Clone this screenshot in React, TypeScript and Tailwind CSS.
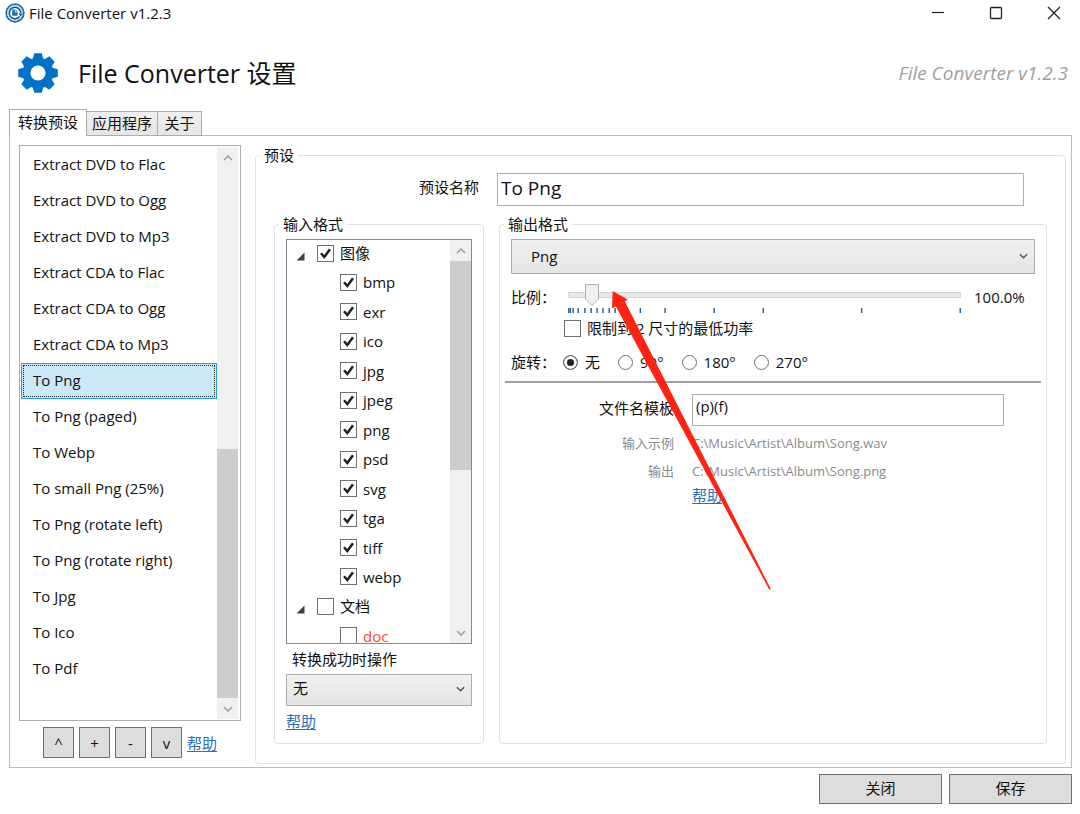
import { useState } from "react";
import clsx from "clsx";

type ScrollBarProps = {
  before: number;
  thumb: number;
};

type CheckProps = {
  id: string;
  label: string;
  checked: boolean;
  onChange: () => void;
  muted?: boolean;
};

const presets = [
  "Extract DVD to Flac",
  "Extract DVD to Ogg",
  "Extract DVD to Mp3",
  "Extract CDA to Flac",
  "Extract CDA to Ogg",
  "Extract CDA to Mp3",
  "To Png",
  "To Png (paged)",
  "To Webp",
  "To small Png (25%)",
  "To Png (rotate left)",
  "To Png (rotate right)",
  "To Jpg",
  "To Ico",
  "To Pdf",
];

const imageFormats = [
  "bmp",
  "exr",
  "ico",
  "jpg",
  "jpeg",
  "png",
  "psd",
  "svg",
  "tga",
  "tiff",
  "webp",
];

const rotations = ["无", "90°", "180°", "270°"];

// slider ticks, in percent of the track
const ticks = [0.2, 0.6, 1.3, 2.6, 4.3, 5.9, 7.4, 8.9, 10.5, 12, 18.4, 24.7, 37.2, 49.7, 74.7, 99.8];

const Chevron = ({ up, className }: { up?: boolean; className?: string }) => (
  <svg viewBox="0 0 10 6" className={clsx("h-[6px]", className ?? "w-[10px]")} fill="none">
    <path d={up ? "M1 5L5 1L9 5" : "M1 1L5 5L9 1"} stroke="currentColor" strokeWidth="1.6" />
  </svg>
);

const ScrollBar = ({ before, thumb }: ScrollBarProps) => (
  <div className="flex w-[21px] shrink-0 flex-col bg-[#f0f0f0] text-[#a0a0a0]">
    <button aria-label="向上滚动" className="flex h-[21px] items-center justify-center">
      <Chevron up />
    </button>
    <div className="min-h-0 flex-1">
      <div style={{ height: `${before}%` }} />
      <div className="bg-[#cdcdcd]" style={{ height: `${thumb}%` }} />
    </div>
    <button aria-label="向下滚动" className="flex h-[21px] items-center justify-center">
      <Chevron />
    </button>
  </div>
);

const Check = ({ id, label, checked, onChange, muted }: CheckProps) => (
  <div className="flex items-center">
    <div className="relative h-[17px] w-[17px]">
      <input
        type="checkbox"
        id={id}
        checked={checked}
        onChange={onChange}
        className="block h-[17px] w-[17px] appearance-none border border-[#707070] bg-white"
      />
      {checked && (
        <svg viewBox="0 0 17 17" className="pointer-events-none absolute inset-0" fill="none">
          <path d="M4 8.2L7.3 12L13 4.2" stroke="#212121" strokeWidth="2.5" />
        </svg>
      )}
    </div>
    <label htmlFor={id} className={clsx("pl-1.5", muted && "text-[#ff4a26]")}>
      {label}
    </label>
  </div>
);

const Expander = () => (
  <button aria-label="折叠" className="mt-1.5 mr-3 h-[9px] w-[9px]">
    <svg viewBox="0 0 9 9">
      <path d="M8.5 0.5V8.5H0.5Z" fill="#404040" />
    </svg>
  </button>
);

const Logo = () => (
  <svg viewBox="0 0 20 20" className="h-5 w-5" fill="none">
    <circle cx="10" cy="10" r="8.8" stroke="#1d6fae" strokeWidth="1.8" />
    <circle cx="10" cy="10" r="7.5" stroke="#a5d0ea" strokeWidth="0.9" />
    <circle cx="10" cy="10" r="6" fill="#fff" />
    <path d="M14.6 13.6A5.8 5.8 0 1 1 15.8 10" stroke="#12578f" strokeWidth="1.6" />
    <path d="M13.4 10.4H18L15.7 13.4Z" fill="#12578f" />
    <path d="M7.2 6.4H10.4L12.6 8.6V12.8H7.2Z" fill="#1d6fae" />
    <path d="M10.1 6.6V9H12.5" stroke="#fff" strokeWidth="0.8" />
  </svg>
);

const Gear = () => (
  <svg viewBox="-20 -20 40 40" className="h-10 w-10" fill="#0173c7">
    {[0, 45, 90, 135, 180, 225, 270, 315].map((angle) => (
      <path key={angle} d="M-5.4 -13.5L-3.8 -19.8H3.8L5.4 -13.5Z" transform={`rotate(${angle})`} />
    ))}
    <circle r="15.4" />
    <circle r="7.6" fill="#fff" />
  </svg>
);

const HelpLink = () => (
  <a href="#help" className="text-[#2a70bd] underline underline-offset-2">
    帮助
  </a>
);

const legendStyle = "px-1 leading-5";
const groupStyle = "min-w-0 rounded-[4px] border border-[#dbe3ea]";
const smallButton = "h-[31px] w-[31px] border border-[#707070] bg-[#dddddd]";
const footerButton = "h-[30px] w-[123px] border border-[#707070] bg-[#dddddd] pb-0.5";
const tabStyle = "border border-[#acacac] pb-0.5";
const selectStyle =
  "block w-full appearance-none border border-[#acacac] bg-linear-to-b from-[#f0f0f0] to-[#e5e5e5]";

const App = () => {
  const [selected, setSelected] = useState("To Png");
  const [name, setName] = useState("To Png");
  const [template, setTemplate] = useState("(p)(f)");
  const [formats, setFormats] = useState<string[]>(["图像", ...imageFormats]);
  const [scale, setScale] = useState(6);
  const [powerOfTwo, setPowerOfTwo] = useState(false);
  const [rotation, setRotation] = useState("无");

  const toggleFormat = (format: string) => {
    setFormats(
      formats.includes(format) ? formats.filter((item) => item !== format) : [...formats, format]
    );
  };

  return (
    <div className="relative flex h-screen flex-col overflow-hidden bg-white font-['Open_Sans','Noto_Sans_CJK_SC',sans-serif] text-[15px] leading-5 text-[#111]">
      {/* title bar */}
      <div className="flex h-[27px] shrink-0 items-center justify-between pr-[19px] pb-px pl-[5px]">
        <div className="flex items-center gap-1">
          <Logo />
          <span>File Converter v1.2.3</span>
        </div>
        <div className="flex items-center gap-11">
          <button aria-label="最小化">
            <svg viewBox="0 0 14 14" className="h-3.5 w-3.5" stroke="#222" fill="none">
              <path d="M1 6.5H13" strokeWidth="1.2" />
            </svg>
          </button>
          <button aria-label="最大化">
            <svg viewBox="0 0 14 14" className="h-3.5 w-3.5" stroke="#222" fill="none">
              <rect x="1.5" y="1.5" width="11" height="11" rx="1" strokeWidth="1.3" />
            </svg>
          </button>
          <button aria-label="关闭窗口">
            <svg viewBox="0 0 14 14" className="h-3.5 w-3.5" stroke="#222" fill="none">
              <path d="M1 1L13 13M13 1L1 13" strokeWidth="1.3" />
            </svg>
          </button>
        </div>
      </div>

      {/* header */}
      <div className="flex h-[82px] shrink-0 items-center justify-between pt-3 pr-3 pb-0.5 pl-[18px]">
        <div className="flex items-center gap-5">
          <Gear />
          <h1 className="text-[25px] leading-8">File Converter 设置</h1>
        </div>
        <span className="text-[19px] text-[#a0a0a0] italic">File Converter v1.2.3</span>
      </div>

      {/* tabs */}
      <div className="z-10 -mb-px flex shrink-0 items-end pl-[9px]" role="tablist">
        <button
          role="tab"
          aria-selected="true"
          className={clsx(tabStyle, "h-[27px] w-[78px] border-b-0 bg-white")}
        >
          转换预设
        </button>
        <button
          role="tab"
          className={clsx(tabStyle, "h-[25px] w-[71px] border-l-0 bg-linear-to-b from-[#f0f0f0] to-[#e5e5e5]")}
        >
          应用程序
        </button>
        <button
          role="tab"
          className={clsx(tabStyle, "h-[25px] w-[44px] border-l-0 bg-linear-to-b from-[#f0f0f0] to-[#e5e5e5]")}
        >
          关于
        </button>
      </div>

      <div className="mr-2 ml-[9px] flex min-h-0 flex-1 gap-3.5 border border-[#bcbcbc] pt-[9px] pr-[5px] pb-[3px] pl-[9px]">
        {/* preset list */}
        <div className="flex w-[222px] shrink-0 flex-col pb-[6px]">
          <div className="flex min-h-0 flex-1 border border-[#abadb3] p-px pr-0.5">
            <ul className="min-w-0 flex-1 overflow-hidden">
              {presets.map((preset) => (
                <li key={preset}>
                  <button
                    onClick={() => setSelected(preset)}
                    className={clsx(
                      "block h-9 w-full border p-px",
                      preset === selected ? "border-[#26a0da] bg-[#cbe8f6]" : "border-transparent"
                    )}
                  >
                    <span
                      className={clsx(
                        "flex h-full items-center border border-dotted px-[9px] pb-0.5",
                        preset === selected ? "border-[#222]" : "border-transparent"
                      )}
                    >
                      {preset}
                    </span>
                  </button>
                </li>
              ))}
            </ul>
            <ScrollBar before={53} thumb={47} />
          </div>
          <div className="mt-[6px] flex items-center gap-[5px] pl-6">
            <button className={smallButton}>^</button>
            <button className={smallButton}>+</button>
            <button className={smallButton}>-</button>
            <button className={smallButton}>v</button>
            <HelpLink />
          </div>
        </div>

        {/* preset settings */}
        <fieldset className={clsx(groupStyle, "flex flex-1 flex-col pr-[18px] pb-[19px] pl-[18px]")}>
          <legend className={clsx(legendStyle, "-ml-[14px]")}>预设</legend>
          <div className="mt-2 mb-2 flex gap-[18px] pr-[23px]">
            <label htmlFor="name" className="w-[205px] pt-1 text-right">
              预设名称
            </label>
            <input
              id="name"
              value={name}
              onChange={(e) => setName(e.target.value)}
              className="h-[33px] min-w-0 flex-1 border border-[#abadb3] px-[3px] pb-1 text-[19px] outline-none"
            />
          </div>

          <div className="flex min-h-0 flex-1 gap-[15px]">
            {/* input formats */}
            <fieldset className={clsx(groupStyle, "flex w-[210px] shrink-0 flex-col px-[11px] pb-3")}>
              <legend className={clsx(legendStyle, "-ml-[7px]")}>输入格式</legend>
              <div className="mt-[5px] flex min-h-0 flex-1 border border-[#828790]">
                <div className="min-w-0 flex-1 overflow-hidden">
                  <ul className="flex h-[409px] flex-col justify-between">
                    <li className="flex h-[26px] items-center pl-[9px]">
                      <Expander />
                      <Check
                        id="images"
                        label="图像"
                        checked={formats.includes("图像")}
                        onChange={() => toggleFormat("图像")}
                      />
                    </li>
                    {imageFormats.map((format) => (
                      <li key={format} className="flex h-[26px] items-center pl-[53px]">
                        <Check
                          id={format}
                          label={format}
                          checked={formats.includes(format)}
                          onChange={() => toggleFormat(format)}
                        />
                      </li>
                    ))}
                    <li className="flex h-[26px] items-center pl-[9px]">
                      <Expander />
                      <Check
                        id="documents"
                        label="文档"
                        checked={formats.includes("文档")}
                        onChange={() => toggleFormat("文档")}
                      />
                    </li>
                    <li className="flex h-[26px] items-center pl-[53px]">
                      <Check
                        id="doc"
                        label="doc"
                        muted
                        checked={formats.includes("doc")}
                        onChange={() => toggleFormat("doc")}
                      />
                    </li>
                  </ul>
                </div>
                <ScrollBar before={0} thumb={58} />
              </div>
              <label htmlFor="after" className="mt-[5px] mb-[5px] pl-1.5">
                转换成功时操作
              </label>
              <div className="relative mb-[5px]">
                <select id="after" className={clsx(selectStyle, "h-8 px-1.5 pb-1")}>
                  <option>无</option>
                </select>
                <Chevron className="pointer-events-none absolute top-3 right-[7px] w-[9px] text-[#555]" />
              </div>
              <div>
                <HelpLink />
              </div>
            </fieldset>

            {/* output format */}
            <fieldset className={clsx(groupStyle, "flex-1")}>
              <legend className={clsx(legendStyle, "ml-1")}>输出格式</legend>
              <div className="relative mx-[11px] mt-[5px]">
                <select
                  aria-label="输出格式"
                  className={clsx(selectStyle, "h-[35px] px-[19px] pb-0.5")}
                >
                  <option>Png</option>
                </select>
                <Chevron className="pointer-events-none absolute top-3.5 right-[7px] w-[9px] text-[#555]" />
              </div>

              <div className="mt-[9px] mr-[11px] ml-[11px] flex">
                <label htmlFor="scale" className="w-[57px] shrink-0 pt-1">
                  比例：
                </label>
                <div className="relative h-[35px] flex-1">
                  <div className="mt-[9px] h-[6px] border border-[#d6d6d6] bg-[#e7eaea]" />
                  <svg className="mt-[10px] h-[6px] w-full">
                    {ticks.map((tick) => (
                      <line key={tick} x1={`${tick}%`} x2={`${tick}%`} y1="0" y2="5" stroke="#1f5f93" strokeWidth="1.4" />
                    ))}
                  </svg>
                  <svg
                    viewBox="0 0 14 22"
                    className="absolute top-px h-[22px] w-[14px] -translate-x-1/2"
                    style={{ left: `${scale}%` }}
                  >
                    <path d="M0.5 0.5H13.5V15L7 21.3L0.5 15Z" fill="#f0f0f0" stroke="#acacac" />
                  </svg>
                  <input
                    id="scale"
                    type="range"
                    min={0}
                    max={100}
                    value={scale}
                    onChange={(e) => setScale(Number(e.target.value))}
                    className="absolute inset-x-0 top-0 h-6 w-full opacity-0"
                  />
                </div>
                <span className="w-[74px] pt-1 pl-[13px]">100.0%</span>
              </div>

              <div className="ml-16">
                <Check
                  id="power"
                  label="限制到 2 尺寸的最低功率"
                  checked={powerOfTwo}
                  onChange={() => setPowerOfTwo(!powerOfTwo)}
                />
              </div>

              <div className="mt-3.5 ml-[11px] flex items-center">
                <span className="w-[52px]">旋转：</span>
                <div className="flex gap-[18px]">
                  {rotations.map((item) => (
                    <label key={item} className="flex items-center gap-[7px]">
                      <input
                        type="radio"
                        name="rotation"
                        checked={rotation === item}
                        onChange={() => setRotation(item)}
                        className="h-[15px] w-[15px] appearance-none rounded-full border border-[#707070] bg-white checked:bg-[#212121] checked:shadow-[inset_0_0_0_3px_#fff]"
                      />
                      <span>{item}</span>
                    </label>
                  ))}
                </div>
              </div>

              <hr className="mx-[5px] mt-[9px] border-t-2 border-[#a0a0a0]" />

              <div className="mt-[11px] grid grid-cols-[174px_1fr] gap-x-[18px] pr-[42px]">
                <label htmlFor="template" className="pt-1 text-right">
                  文件名模板
                </label>
                <input
                  id="template"
                  value={template}
                  onChange={(e) => setTemplate(e.target.value)}
                  className="h-8 min-w-0 border border-[#abadb3] px-[3px] pb-2 outline-none"
                />
                <span className="mt-[7px] text-right text-[13px] text-[#8a8a8a]">输入示例</span>
                <span className="mt-[7px] text-[13px] text-[#8a8a8a]">C:\Music\Artist\Album\Song.wav</span>
                <span className="mt-2 text-right text-[13px] text-[#8a8a8a]">输出</span>
                <span className="mt-2 text-[13px] text-[#8a8a8a]">C:\Music\Artist\Album\Song.png</span>
                <div className="col-start-2 mt-1">
                  <HelpLink />
                </div>
              </div>
            </fieldset>
          </div>
        </fieldset>
      </div>

      {/* footer */}
      <div className="flex shrink-0 justify-end gap-[7px] pt-[6px] pr-2 pb-[10px]">
        <button className={footerButton}>关闭</button>
        <button className={footerButton}>保存</button>
      </div>

      {/* pointer drawn over the window */}
      <svg
        viewBox="0 0 160 300"
        className="pointer-events-none absolute top-[290px] left-[611px] z-20 h-[300px] w-[160px]"
      >
        <path d="M1.7 1L17 9.7L13.8 11.2L159.8 299L158.4 299.8L4.8 16.2L1 18.5Z" fill="#ff2313" />
      </svg>
    </div>
  );
};

export default App;
